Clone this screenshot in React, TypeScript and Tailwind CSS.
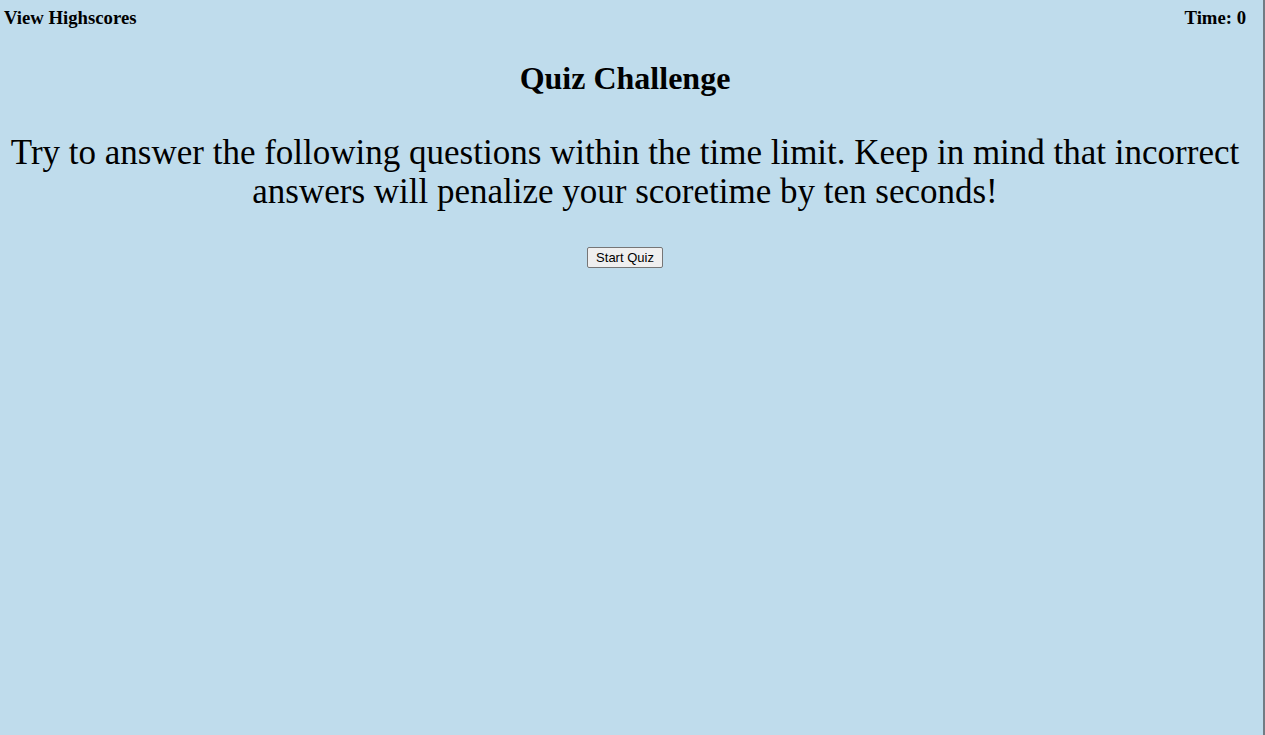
import React from 'react';

export default function App() {
    return (
        <div className="h-[735px] w-full bg-[#bfdcec] border-r-2 border-[#717c84] font-['Liberation_Serif',serif] text-black overflow-hidden">
            <div className="w-[1250px]">
                {/* Header */}
                <header className="flex justify-between items-center px-1 pt-[7px] text-[18.72px] font-bold leading-[22px]">
                    <span>View Highscores</span>
                    <span>Time: 0</span>
                </header>

                {/* Intro */}
                <main className="flex flex-col items-center text-center">
                    <h1 className="mt-[31px] text-[32px] font-bold leading-[37px]">Quiz Challenge</h1>
                    <p className="mt-[36px] px-2 text-[35px] leading-[39px]">
                        Try to answer the following questions within the time limit. Keep in mind that incorrect answers will penalize your scoretime by ten seconds!
                    </p>
                    <button className="mt-[36px] h-[21px] px-[8px] bg-[#efefef] border border-[#767676] rounded-[2px] font-['Liberation_Sans',sans-serif] text-[13px] leading-none">
                        Start Quiz
                    </button>
                </main>
            </div>
        </div>
    );
}
